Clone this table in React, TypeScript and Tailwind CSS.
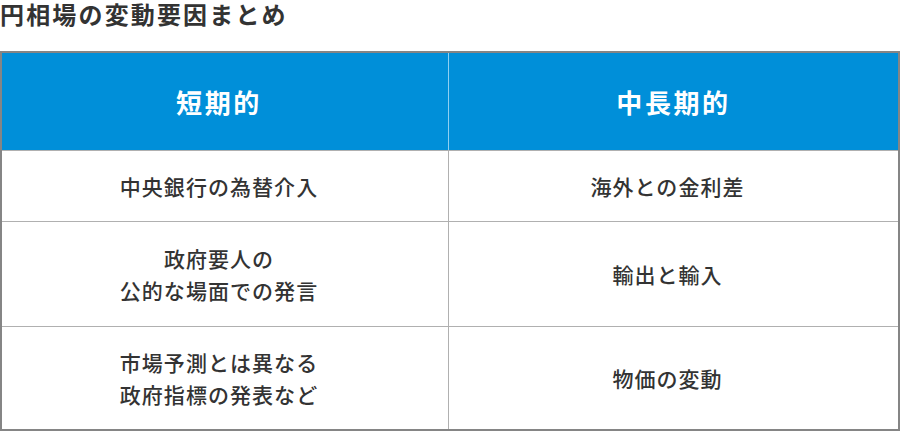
const rows = [
  { short: ["中央銀行の為替介入"], long: ["海外との金利差"], h: "h-[71px]" },
  { short: ["政府要人の", "公的な場面での発言"], long: ["輸出と輸入"], h: "h-[105px]" },
  { short: ["市場予測とは異なる", "政府指標の発表など"], long: ["物価の変動"], h: "h-[103px]" },
];

const App = () => {
  return (
    <div className="w-[900px] h-[436px] bg-white text-[#333] font-['Noto_Sans_CJK_JP','Noto_Sans',sans-serif]">
      <h1 className="h-[51px] pt-[1px] text-[24px] leading-[26px] font-bold tracking-[0.09em]">円相場の変動要因まとめ</h1>
      <div className="border-2 border-[#858585] grid grid-cols-[447px_1fr]">
        <div className="h-[97px] bg-[#008fd9] border-r border-[#8fd0f2] flex items-center justify-center pr-3 text-white text-[26px] font-bold tracking-[0.1em]">
          短期的
        </div>
        <div className="h-[97px] bg-[#008fd9] flex items-center justify-center text-white text-[26px] font-bold tracking-[0.1em]">
          中長期的
        </div>
        {rows.map((row, i) => (
          <div key={i} className="contents">
            <div className={`${row.h} border-t border-r border-[#b0b0b0] flex flex-col items-center justify-center pr-3 text-[21px] leading-[32px] font-medium tracking-[0.05em]`}>
              {row.short.map((line) => (
                <span key={line}>{line}</span>
              ))}
            </div>
            <div className={`${row.h} border-t border-[#b0b0b0] flex flex-col items-center justify-center pr-3 text-[21px] leading-[32px] font-medium tracking-[0.05em]`}>
              {row.long.map((line) => (
                <span key={line}>{line}</span>
              ))}
            </div>
          </div>
        ))}
      </div>
    </div>
  );
};

export default App;
